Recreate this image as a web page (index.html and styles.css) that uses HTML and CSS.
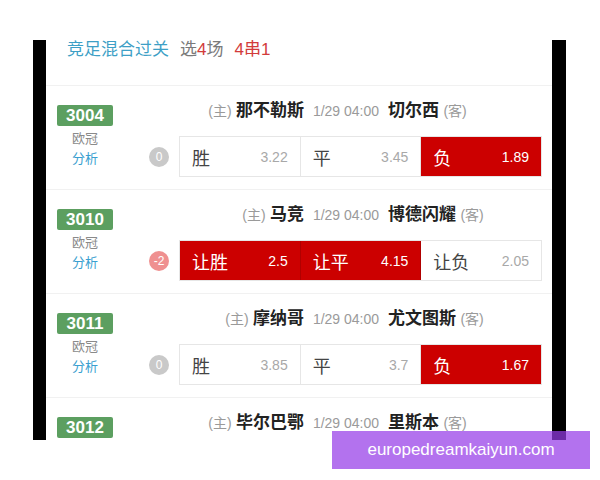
FILE: index.html
```html
<!DOCTYPE html>
<html lang="zh">
<head>
<meta charset="utf-8">
<title>竞足混合过关</title>
<link rel="stylesheet" href="styles.css">
</head>
<body>
<div class="page">
  <div class="frame">
    <div class="bar bar-left"></div>
    <div class="screen">
      <div class="title">
        <span class="t-main">竞足混合过关</span>
        <span class="t-pick">选<em>4</em>场</span>
        <span class="t-combo">4串1</span>
      </div>

      <div class="match">
        <div class="left">
          <div class="badge">3004</div>
          <div class="league">欧冠</div>
          <div class="analysis">分析</div>
        </div>
        <div class="right">
          <div class="teams">
            <div class="home"><span class="tag">(主)</span> <b>那不勒斯</b></div>
            <div class="time">1/29 04:00</div>
            <div class="away"><b>切尔西</b> <span class="tag">(客)</span></div>
          </div>
          <div class="bet">
            <div class="hcap"><span class="dot">0</span></div>
            <div class="odds">
              <div class="cell"><span class="lbl">胜</span><span class="num">3.22</span></div>
              <div class="cell"><span class="lbl">平</span><span class="num">3.45</span></div>
              <div class="cell on"><span class="lbl">负</span><span class="num">1.89</span></div>
            </div>
          </div>
        </div>
      </div>

      <div class="match">
        <div class="left">
          <div class="badge">3010</div>
          <div class="league">欧冠</div>
          <div class="analysis">分析</div>
        </div>
        <div class="right">
          <div class="teams">
            <div class="home"><span class="tag">(主)</span> <b>马竞</b></div>
            <div class="time">1/29 04:00</div>
            <div class="away"><b>博德闪耀</b> <span class="tag">(客)</span></div>
          </div>
          <div class="bet">
            <div class="hcap"><span class="dot neg">-2</span></div>
            <div class="odds">
              <div class="cell on"><span class="lbl">让胜</span><span class="num">2.5</span></div>
              <div class="cell on"><span class="lbl">让平</span><span class="num">4.15</span></div>
              <div class="cell"><span class="lbl">让负</span><span class="num">2.05</span></div>
            </div>
          </div>
        </div>
      </div>

      <div class="match">
        <div class="left">
          <div class="badge">3011</div>
          <div class="league">欧冠</div>
          <div class="analysis">分析</div>
        </div>
        <div class="right">
          <div class="teams">
            <div class="home"><span class="tag">(主)</span> <b>摩纳哥</b></div>
            <div class="time">1/29 04:00</div>
            <div class="away"><b>尤文图斯</b> <span class="tag">(客)</span></div>
          </div>
          <div class="bet">
            <div class="hcap"><span class="dot">0</span></div>
            <div class="odds">
              <div class="cell"><span class="lbl">胜</span><span class="num">3.85</span></div>
              <div class="cell"><span class="lbl">平</span><span class="num">3.7</span></div>
              <div class="cell on"><span class="lbl">负</span><span class="num">1.67</span></div>
            </div>
          </div>
        </div>
      </div>

      <div class="match">
        <div class="left">
          <div class="badge">3012</div>
          <div class="league">欧冠</div>
          <div class="analysis">分析</div>
        </div>
        <div class="right">
          <div class="teams">
            <div class="home"><span class="tag">(主)</span> <b>毕尔巴鄂</b></div>
            <div class="time">1/29 04:00</div>
            <div class="away"><b>里斯本</b> <span class="tag">(客)</span></div>
          </div>
        </div>
      </div>
    </div>
    <div class="bar bar-right"></div>
  </div>
  <div class="banner">europedreamkaiyun.com</div>
</div>
</body>
</html>
```

FILE: styles.css
```css
html, body {
  margin: 0;
  padding: 0;
  background: #ffffff;
}

body {
  font-family: "Liberation Sans", "Noto Sans CJK SC", sans-serif;
  color: #333;
}

.page {
  position: relative;
  width: 600px;
  height: 480px;
  overflow: hidden;
}

.frame {
  display: flex;
  margin: 40px 0 0 33px;
  height: 400px;
}

.bar {
  background: #000;
}

.bar-left {
  width: 13px;
}

.bar-right {
  width: 14px;
}

.screen {
  width: 506px;
  height: 400px;
  overflow: hidden;
  background: #fff;
}

.title {
  height: 46px;
  box-sizing: border-box;
  border-bottom: 1px solid #f1f1f1;
  padding-left: 21px;
  font-size: 17px;
  line-height: 20px;
  display: flex;
  gap: 11px;
}

.t-main {
  color: #3d9fc6;
}

.t-pick {
  color: #7a7a7a;
}

.t-pick em {
  font-style: normal;
  color: #d23b3b;
}

.t-combo {
  color: #d23b3b;
}

.match {
  height: 104px;
  box-sizing: border-box;
  border-bottom: 1px solid #f1f1f1;
  display: flex;
  padding: 15px 10px 0 11px;
}

.match .left {
  width: 56px;
  display: flex;
  flex-direction: column;
  align-items: center;
  padding-top: 4px;
}

.badge {
  width: 56px;
  height: 21px;
  line-height: 21px;
  background: #5c9f60;
  color: #fff;
  font-weight: bold;
  font-size: 17px;
  text-align: center;
  border-radius: 2px;
}

.league {
  margin-top: 3px;
  font-size: 13px;
  line-height: 20px;
  color: #8a8a8a;
}

.analysis {
  font-size: 13px;
  line-height: 20px;
  color: #3a9fd0;
}

.match .right {
  flex: 1;
  display: flex;
  flex-direction: column;
}

.teams {
  display: grid;
  grid-template-columns: 191px 84px 1fr;
  line-height: 20px;
  height: 20px;
  white-space: nowrap;
}

.home {
  text-align: right;
}

.away {
  text-align: left;
}

.teams b {
  font-size: 17px;
  font-weight: bold;
  color: #222;
}

.tag {
  font-size: 14px;
  color: #9a9a9a;
}

.time {
  text-align: center;
  font-size: 14px;
  color: #9a9a9a;
}

.bet {
  display: flex;
  align-items: center;
  margin-top: 15px;
}

.hcap {
  width: 66px;
  display: flex;
  justify-content: flex-end;
  padding-right: 10px;
  box-sizing: border-box;
}

.dot {
  width: 20px;
  height: 20px;
  border-radius: 50%;
  background: #c9c9c9;
  color: #fff;
  font-size: 12px;
  line-height: 20px;
  text-align: center;
}

.dot.neg {
  background: #ef9090;
}

.odds {
  display: flex;
  width: 363px;
  height: 41px;
  border: 1px solid #e6e6e6;
  box-sizing: border-box;
}

.cell {
  flex: 1;
  display: flex;
  justify-content: space-between;
  align-items: center;
  padding: 0 12px;
  border-right: 1px solid #e6e6e6;
}

.cell:last-child {
  border-right: none;
}

.lbl {
  font-size: 18px;
  color: #444;
}

.num {
  font-size: 14px;
  color: #a8a8a8;
}

.cell.on {
  background: #cc0000;
  border-right-color: #b00000;
}

.cell.on .lbl,
.cell.on .num {
  color: #fff;
}

.banner {
  position: absolute;
  left: 332px;
  top: 431px;
  width: 258px;
  height: 38px;
  background: rgba(150, 60, 232, 0.72);
  color: #fff;
  font-size: 17px;
  line-height: 38px;
  text-align: center;
}
```
